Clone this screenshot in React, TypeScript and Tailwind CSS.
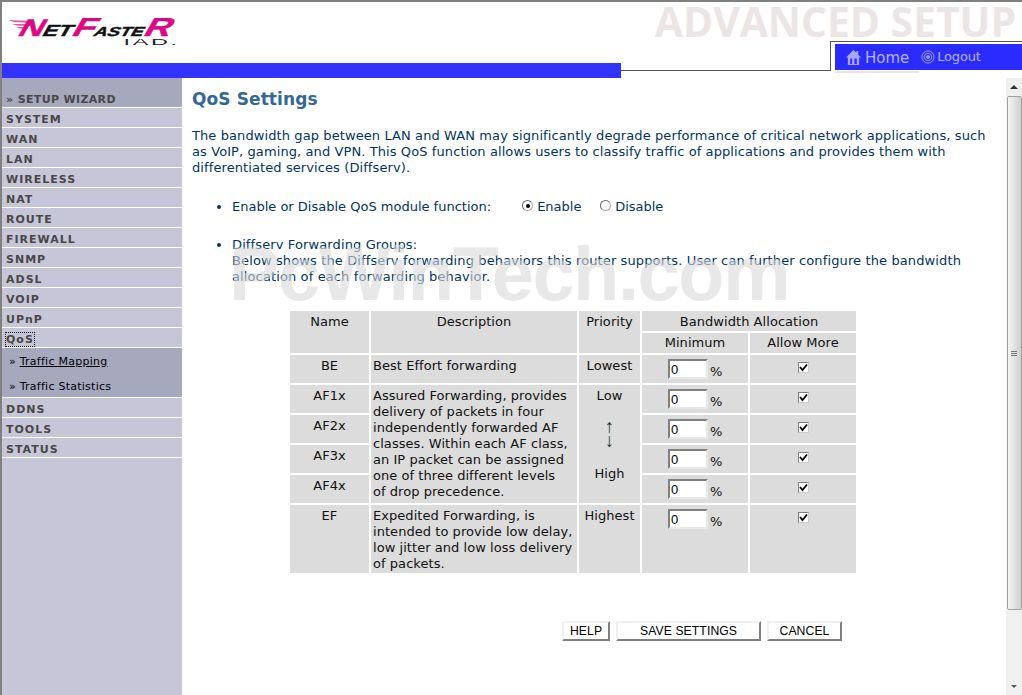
const menu = ['SYSTEM', 'WAN', 'LAN', 'WIRELESS', 'NAT', 'ROUTE', 'FIREWALL', 'SNMP', 'ADSL', 'VOIP', 'UPnP'];
const menuAfter = ['DDNS', 'TOOLS', 'STATUS'];

function MenuRow({ label, focus }: { label: string; focus?: boolean }) {
  return (
    <div className="h-5 border-b border-white pl-[4px] pt-[3px] text-[11px] leading-[18px] font-bold tracking-[1px] text-[#4a4646]">
      <span className={focus ? 'outline-1 outline-dotted outline-black' : ''}>{label}</span>
    </div>
  );
}

function Logo() {
  return (
    <div className="relative ml-[6px] mt-[17px] h-[30px] w-[172px]">
      <svg className="absolute left-0 top-0" width="40" height="20" viewBox="0 0 40 20">
        <path d="M0 1 L24 2 L25 4 L6 3 Z M4 5 L22 5 L22 7 L9 6.500 Z M8 8 L20 8 L20 10 L12 9.500 Z" fill="#e8549f" />
      </svg>
      <div className="absolute left-[12px] top-[-4px] origin-left scale-x-[1.42] -skew-x-[22deg] whitespace-nowrap font-['Liberation_Sans',sans-serif] font-bold leading-[24px] text-[#111] [-webkit-text-stroke:0.4px]">
        <span className="text-[24px] text-[#dc0a82]">N</span>
        <span className="text-[16px]">ET</span>
        <span className="text-[26px] text-[#dc0a82]">F</span>
        <span className="text-[13px]">ASTE</span>
        <span className="text-[26px] text-[#dc0a82]">R</span>
      </div>
      <div className="absolute right-0 top-[18px] origin-right scale-x-[2.6] font-['Liberation_Sans',sans-serif] text-[9px] leading-[10px] tracking-[1px] text-[#222]">
        IAD.
      </div>
    </div>
  );
}

function Header() {
  return (
    <div className="flex h-[78px] border-t-2 border-l-2 border-[#808080]">
      <div className="flex w-[619px] flex-col">
        <div className="h-[61px]">
          <Logo />
        </div>
        <div className="h-[15px] bg-[#3333ff]" />
      </div>
      <div className="flex-1">
        <div className="h-[39px] pr-[6px] text-right font-['Open_Sans',sans-serif] text-[40.8px] leading-[39px] font-bold whitespace-nowrap text-[#ebe5e5]">
          ADVANCED SETUP
        </div>
        <div className="flex h-[30px]">
          <div className="w-[209px] border-b-[1.5px] border-[#555]" />
          <div className="flex-1 border-t-[1.5px] border-l-[1.5px] border-[#555] pt-[2px] pl-1">
            <div className="h-[26px] bg-[#2b2bff]">
              <div className="flex items-center pl-[10px] pt-[2px] font-['DejaVu_Sans',sans-serif] text-[#b4b4ff]">
                <svg width="17" height="17" viewBox="0 0 18 18" fill="#a6a6ff">
                  <path d="M1 9 L9 1 L12 4 L12 2 L14 2 L14 6 L17 9 L15 9 L15 17 L3 17 L3 9 Z" />
                  <path d="M5.500 10 H7.500 V16 H5.500 Z M10 10 H12.500 V16 H10 Z" fill="#2b2bff" />
                </svg>
                <span className="ml-[3px] mt-[2px] text-[15px] leading-5">Home</span>
                <svg className="ml-[12px]" width="14" height="14" viewBox="0 0 15 15" fill="none" stroke="#a6a6ff">
                  <circle cx="7.500" cy="7.500" r="6.500" />
                  <circle cx="7.500" cy="7.500" r="4" />
                  <circle cx="7.500" cy="7.500" r="1.500" fill="#a6a6ff" />
                </svg>
                <span className="ml-[2px] text-[13px] leading-5 tracking-[-0.2px]">Logout</span>
              </div>
            </div>
          </div>
        </div>
        <div className="ml-[214px] h-[2px] w-[84px] bg-[#ebe5e5]" />
      </div>
    </div>
  );
}

function Sidebar() {
  return (
    <div className="w-[180px] shrink-0 bg-[#c6c6d8]">
      <div className="h-[30px] border-b border-white bg-[#a6a8bd] pl-[4px] pt-[14px] text-[11px] leading-[15px] font-bold tracking-[0.35px] text-[#4a4646]">
        » SETUP WIZARD
      </div>
      {menu.map((m) => (
        <MenuRow key={m} label={m} />
      ))}
      <MenuRow label="QoS" focus />
      <div className="h-[50px] border-b border-white bg-[#a6a8bd] pl-[7px] text-[11px] tracking-[0.25px] text-black">
        <div className="h-[25px] pt-[6px] leading-4">
          » <span className="underline">Traffic Mapping</span>
        </div>
        <div className="h-[25px] pt-[6px] leading-4">
          » <span>Traffic Statistics</span>
        </div>
      </div>
      {menuAfter.map((m) => (
        <MenuRow key={m} label={m} />
      ))}
    </div>
  );
}

function Radio({ checked }: { checked?: boolean }) {
  return (
    <span className="relative mb-[4px] inline-block size-[11px] rounded-full border border-[#aaa] border-t-[#666] border-l-[#666] bg-white align-middle">
      {checked && <span className="absolute left-[3px] top-[3px] size-[4px] rounded-full bg-black" />}
    </span>
  );
}

function Check() {
  return (
    <span className="inline-flex size-[11px] items-center justify-center border border-[#808080] border-r-[#ccc] border-b-[#ccc] bg-white">
      <svg width="9" height="9" viewBox="0 0 9 9" fill="none" stroke="#000" strokeWidth="1.800">
        <path d="M1 4 L3.500 7 L8 1.500" />
      </svg>
    </span>
  );
}

function Percent() {
  return (
    <div className="flex items-start justify-start pl-[26px]">
      <input
        readOnly
        value="0"
        className="h-[20px] w-[40px] border-2 border-[#808080] border-r-[#e8e8e8] border-b-[#e8e8e8] bg-white pl-[1px] font-['Liberation_Sans',sans-serif] text-[13px] text-black"
      />
      <span className="ml-[2px] mt-[5px]">%</span>
    </div>
  );
}

const th = 'bg-[#dcdcdc] align-top text-center font-normal p-0';
const td = 'bg-[#dcdcdc] align-top p-0';

function QosTable() {
  return (
    <table className="ml-[96px] mt-[24px] w-[570px] table-fixed border-separate border-spacing-[2px] text-[13px] leading-4 tracking-[0.05px] text-[#111]">
      <colgroup>
        <col className="w-[79px]" />
        <col className="w-[206px]" />
        <col className="w-[61px]" />
        <col className="w-[106px]" />
        <col className="w-[106px]" />
      </colgroup>
      <thead>
        <tr className="h-[20px]">
          <th rowSpan={2} className={`${th} pt-[3px]`}>Name</th>
          <th rowSpan={2} className={`${th} pt-[3px]`}>Description</th>
          <th rowSpan={2} className={`${th} pt-[3px]`}>Priority</th>
          <th colSpan={2} className={`${th} pt-[3px]`}>Bandwidth Allocation</th>
        </tr>
        <tr className="h-[20px]">
          <th className={`${th} pt-[2px]`}>Minimum</th>
          <th className={`${th} pt-[2px]`}>Allow More</th>
        </tr>
      </thead>
      <tbody>
        <tr className="h-[28px]">
          <td className={`${td} pt-[3px] text-center`}>BE</td>
          <td className={`${td} pl-[2px] pt-[3px]`}>Best Effort forwarding</td>
          <td className={`${td} pt-[3px] text-center`}>Lowest</td>
          <td className={`${td} pt-[4px]`}><Percent /></td>
          <td className={`${td} pt-[5px] text-center`}><Check /></td>
        </tr>
        {['AF1x', 'AF2x', 'AF3x', 'AF4x'].map((name, i) => (
          <tr key={name} className="h-[28px]">
            <td className={`${td} pt-[3px] text-center`}>{name}</td>
            {i === 0 && (
              <>
                <td rowSpan={4} className={`${td} pl-[2px] pt-[3px]`}>
                  Assured Forwarding, provides delivery of packets in four independently forwarded AF classes. Within each AF class, an IP packet can be assigned one of three different levels
                  <br />
                  of drop precedence.
                </td>
                <td rowSpan={4} className={`${td} pt-[3px] text-center`}>
                  <div>Low</div>
                  <div className="mt-[16px] font-['Liberation_Sans',sans-serif] text-[19px] leading-[14px] text-[#1c3a1c]">↑</div>
                  <div className="font-['Liberation_Sans',sans-serif] text-[19px] leading-[14px] text-[#1c3a1c]">↓</div>
                  <div className="mt-[18px]">High</div>
                </td>
              </>
            )}
            <td className={`${td} pt-[4px]`}><Percent /></td>
            <td className={`${td} pt-[5px] text-center`}><Check /></td>
          </tr>
        ))}
        <tr className="h-[68px]">
          <td className={`${td} pt-[3px] text-center`}>EF</td>
          <td className={`${td} pl-[2px] pt-[3px]`}>
            Expedited Forwarding, is intended to provide low delay, low jitter and low loss delivery of packets.
          </td>
          <td className={`${td} pt-[3px] text-center`}>Highest</td>
          <td className={`${td} pt-[4px]`}><Percent /></td>
          <td className={`${td} pt-[5px] text-center`}><Check /></td>
        </tr>
      </tbody>
    </table>
  );
}

const btn =
  "h-[20px] border-2 border-[#f0f0f0] border-r-[#808080] border-b-[#808080] bg-white font-['Liberation_Sans',sans-serif] text-[12.2px] leading-4 text-black";

function Content() {
  return (
    <div className="relative flex-1 overflow-hidden pl-[10px] font-['DejaVu_Sans',sans-serif] text-[13px] leading-4 tracking-[0.095px] text-[#003366]">
      <h1 className="mt-[11px] text-[17px] leading-[20px] font-bold text-[#336699]">QoS Settings</h1>
      <p className="mt-[19px] w-[800px]">
        The bandwidth gap between LAN and WAN may significantly degrade performance of critical network applications, such as VoIP, gaming, and VPN. This QoS function allows users to classify traffic of applications and provides them with differentiated services (Diffserv).
      </p>
      <ul className="mt-[23px] ml-[40px] w-[760px] list-disc">
        <li className="tracking-normal">
          <span className="inline-block w-[290px]">Enable or Disable QoS module function:</span>
          <span className="inline-block w-[78px]"><Radio checked /> Enable</span>
          <Radio /> Disable
        </li>
        <li className="mt-[22px] tracking-[0.12px]">
          Diffserv Forwarding Groups:
          <br />
          Below shows the Diffserv forwarding behaviors this router supports. User can further configure the bandwidth allocation of each forwarding behavior.
        </li>
      </ul>
      <QosTable />
      <div className="mt-[46px] ml-[370px] flex gap-[6px]">
        <button className={`${btn} w-[48px]`}>HELP</button>
        <button className={`${btn} w-[145px]`}>SAVE SETTINGS</button>
        <button className={`${btn} w-[75px]`}>CANCEL</button>
      </div>
      {/* site watermark sits on top of the page text */}
      <div className="pointer-events-none absolute left-[47px] top-[158px] whitespace-nowrap font-['Liberation_Sans',sans-serif] text-[76px] leading-[76px] font-bold tracking-[-1.6px] text-[#d8d8d8]/60">
        PcWinTech.com
      </div>
    </div>
  );
}

function Scrollbar() {
  return (
    <div className="flex w-[16px] shrink-0 flex-col items-center bg-[#f0f0f0]">
      <div className="flex h-[18px] items-center justify-center">
        <div className="size-0 border-x-[4px] border-b-[4px] border-x-transparent border-b-[#333]" />
      </div>
      <div className="flex h-[514px] w-[15px] flex-col items-center justify-center rounded-[2px] border border-[#a0a0a0] bg-gradient-to-r from-[#f4f4f4] to-[#cfcfcf]">
        <div className="h-[1px] w-[6px] bg-[#777]" />
        <div className="mt-[1px] h-[1px] w-[6px] bg-[#777]" />
        <div className="mt-[1px] h-[1px] w-[6px] bg-[#777]" />
      </div>
      <div className="flex-1" />
      <div className="flex h-[18px] items-center justify-center">
        <div className="size-0 border-x-[3px] border-t-[3px] border-x-transparent border-t-[#555]" />
      </div>
    </div>
  );
}

export default function App() {
  return (
    <div className="h-[695px] w-[1022px] overflow-hidden bg-white font-['DejaVu_Sans',sans-serif]">
      <Header />
      <div className="flex h-[617px] border-l-2 border-[#808080]">
        <Sidebar />
        <Content />
        <Scrollbar />
      </div>
    </div>
  );
}
